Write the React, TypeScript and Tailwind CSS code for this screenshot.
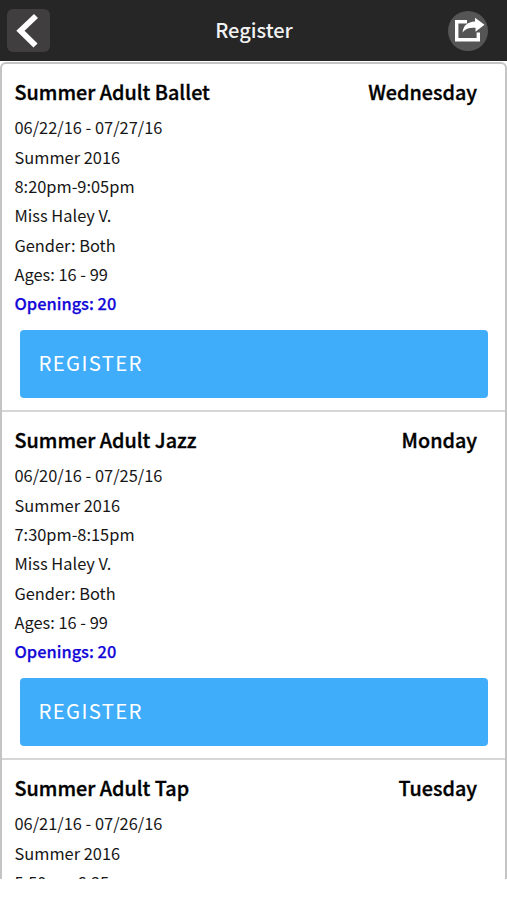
import React from "react";

interface ClassItem {
  name: string;
  day: string;
  dates: string;
  session: string;
  time: string;
  teacher: string;
  gender: string;
  ages: string;
  openings: number;
}

const classes: ClassItem[] = [
  {
    name: "Summer Adult Ballet",
    day: "Wednesday",
    dates: "06/22/16 - 07/27/16",
    session: "Summer 2016",
    time: "8:20pm-9:05pm",
    teacher: "Miss Haley V.",
    gender: "Both",
    ages: "16 - 99",
    openings: 20,
  },
  {
    name: "Summer Adult Jazz",
    day: "Monday",
    dates: "06/20/16 - 07/25/16",
    session: "Summer 2016",
    time: "7:30pm-8:15pm",
    teacher: "Miss Haley V.",
    gender: "Both",
    ages: "16 - 99",
    openings: 20,
  },
  {
    name: "Summer Adult Tap",
    day: "Tuesday",
    dates: "06/21/16 - 07/26/16",
    session: "Summer 2016",
    time: "5:50pm-6:35pm",
    teacher: "Miss Haley V.",
    gender: "Both",
    ages: "16 - 99",
    openings: 20,
  },
];

const Header: React.FC = () => (
  <header className="grid h-[61px] shrink-0 grid-cols-[1fr_auto_1fr] items-center bg-[#262626] pl-[7px] pr-[6px]">
    <button className="flex h-[43px] w-[43px] items-center justify-center rounded-md bg-[#403e3f]">
      <svg width="43" height="43" viewBox="0 0 43 43" fill="none">
        <path d="M29 7L13.5 21.7L28.5 36.5" stroke="#fff" strokeWidth="5.8" />
      </svg>
    </button>
    <h1 className="pb-[2px] text-[20px] font-medium leading-[30px] text-[#f2f2f2]">Register</h1>
    <button className="mr-[13.5px] h-10 w-10 justify-self-end rounded-full bg-[#555]">
      <svg width="40" height="40" viewBox="0 0 40 40" fill="none">
        <path d="M19 10.8H8.7V28.8H30.3V21.5" stroke="#fff" strokeWidth="3.4" />
        <path
          d="M14.5 21.5C15.5 14 19.5 11 27 10.5V6.7L36.5 13.7L27.5 20.8V16.8C21.5 16.3 18 17.5 14.5 21.5Z"
          fill="#fff"
        />
      </svg>
    </button>
  </header>
);

const ClassRow: React.FC<{ item: ClassItem }> = ({ item }) => (
  <li className="h-[348px] shrink-0 border-b-2 border-[#d6d6d6] pt-[13px]">
    <div className="flex justify-between pl-[12.5px] pr-7 text-[19.75px] font-medium leading-[30px] text-black [-webkit-text-stroke:0.35px_#000]">
      <h2>{item.name}</h2>
      <span>{item.day}</span>
    </div>
    <div className="mt-[6.35px] pl-[12.5px] text-[16.4px] leading-[29.33px] text-[#161616]">
      <p>{item.dates}</p>
      <p>{item.session}</p>
      <p>{item.time}</p>
      <p>{item.teacher}</p>
      <p>Gender: {item.gender}</p>
      <p>Ages: {item.ages}</p>
      <p className="font-medium text-[#1207d8] [-webkit-text-stroke:0.25px_#1207d8]">
        Openings: {item.openings}
      </p>
    </div>
    <button className="ml-[18px] mt-[11.65px] block h-[68px] w-[468px] rounded-[4px] bg-[#40adfa] pb-[4px] pl-[18.5px] text-left text-[20.4px] tracking-[1.3px] text-white">
      REGISTER
    </button>
  </li>
);

const App: React.FC = () => {
  return (
    <div className="h-[900px] w-[507px] overflow-hidden bg-white font-['Noto_Sans_CJK_SC',sans-serif]">
      <div className="flex h-[879px] flex-col overflow-hidden">
        <Header />
        <ul className="mt-px flex min-h-0 flex-1 flex-col overflow-hidden rounded-t-md border-x-2 border-t-2 border-[#c4c4c4]">
          {classes.map((item) => (
            <ClassRow key={item.name} item={item} />
          ))}
        </ul>
      </div>
    </div>
  );
};

export default App;
